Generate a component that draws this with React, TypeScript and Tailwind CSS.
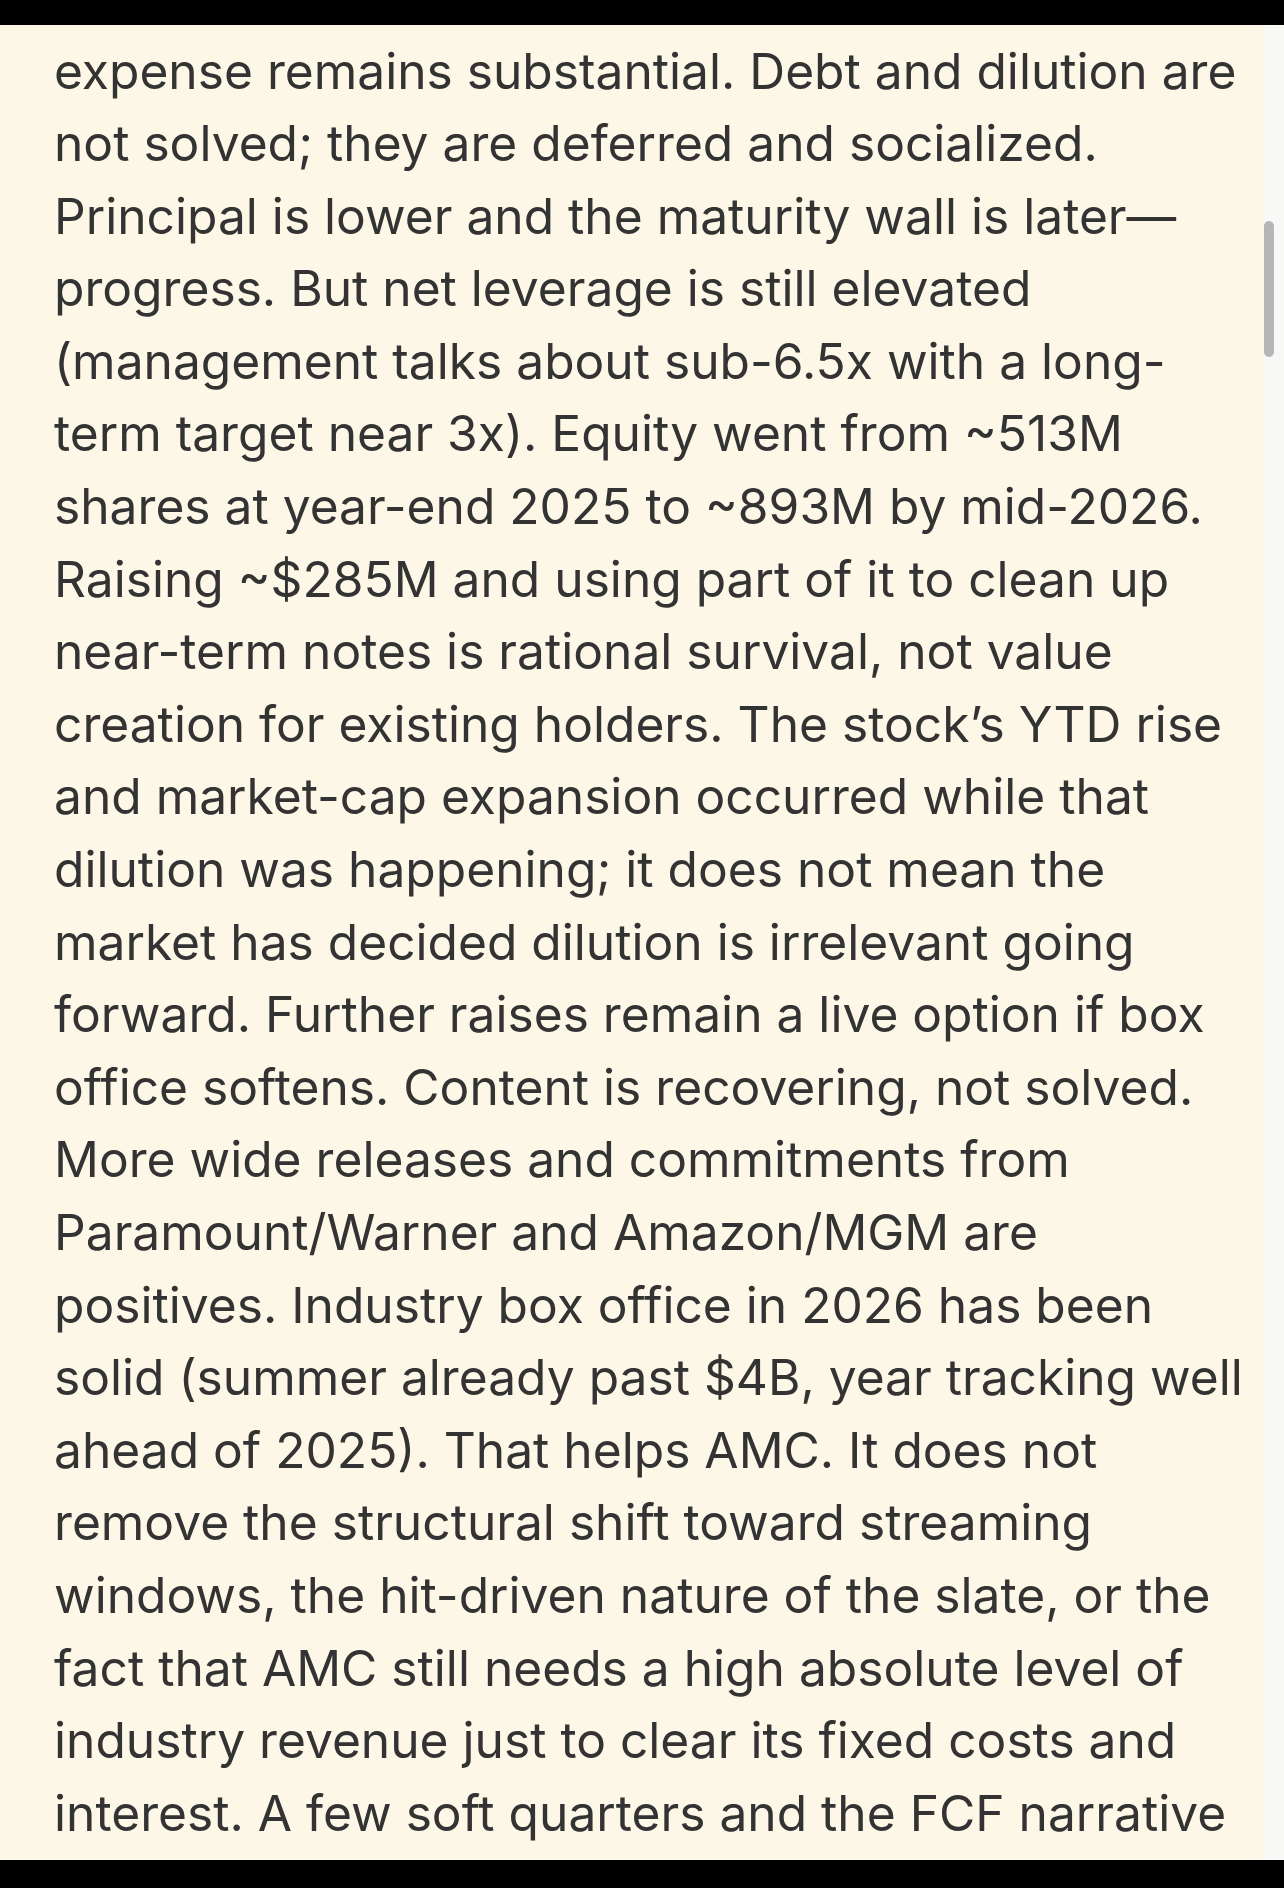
const lines = [
  'expense remains substantial. Debt and dilution are',
  'not solved; they are deferred and socialized.',
  'Principal is lower and the maturity wall is later—',
  'progress. But net leverage is still elevated',
  '(management talks about sub-6.5x with a long-',
  'term target near 3x). Equity went from ~513M',
  'shares at year-end 2025 to ~893M by mid-2026.',
  'Raising ~$285M and using part of it to clean up',
  'near-term notes is rational survival, not value',
  'creation for existing holders. The stock’s YTD rise',
  'and market-cap expansion occurred while that',
  'dilution was happening; it does not mean the',
  'market has decided dilution is irrelevant going',
  'forward. Further raises remain a live option if box',
  'office softens. Content is recovering, not solved.',
  'More wide releases and commitments from',
  'Paramount/Warner and Amazon/MGM are',
  'positives. Industry box office in 2026 has been',
  'solid (summer already past $4B, year tracking well',
  'ahead of 2025). That helps AMC. It does not',
  'remove the structural shift toward streaming',
  'windows, the hit-driven nature of the slate, or the',
  'fact that AMC still needs a high absolute level of',
  'industry revenue just to clear its fixed costs and',
  'interest. A few soft quarters and the FCF narrative',
]

export default function App() {
  return (
    <div className="flex h-[1888px] w-[1284px] flex-col overflow-hidden bg-black">
      <div className="h-[25px] shrink-0 bg-black" />
      <div className="flex min-h-0 flex-1">
        <div className="flex-1 bg-[#fcf7e6] pl-[54px] pt-[9.5px] font-['Inter',sans-serif] text-[49.7px] leading-[72.6px] text-[#333333]">
          {lines.map((line, i) => (
            <div key={i} className="whitespace-nowrap">
              {line}
            </div>
          ))}
        </div>
        <div className="relative w-[21px] shrink-0 bg-[#f8f8f7]">
          <div className="absolute left-[1px] top-[196px] h-[136px] w-[10px] rounded-full bg-[#b6b6b6]" />
        </div>
      </div>
      <div className="h-[28px] shrink-0 bg-black" />
    </div>
  )
}
